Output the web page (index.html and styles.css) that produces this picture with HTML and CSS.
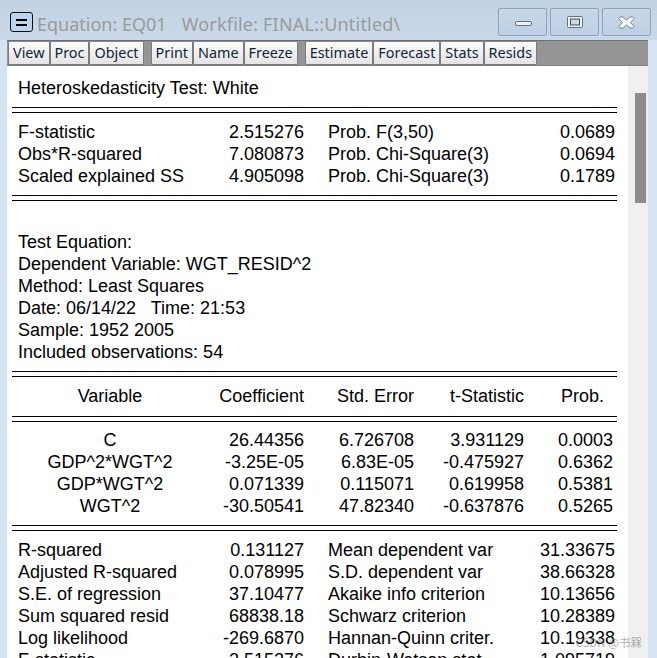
FILE: index.html
```html
<!DOCTYPE html>
<html lang="en">
<head>
<meta charset="utf-8">
<title>Equation: EQ01</title>
<link rel="stylesheet" href="styles.css">
</head>
<body>
<div class="window">
  <header class="titlebar">
    <div class="sysbtn"><span class="sysbar"></span></div>
    <div class="title"><span>Equation: EQ01</span><span class="wf">Workfile: FINAL::Untitled\</span></div>
    <div class="caption">
      <div class="capbtn"><svg width="24" height="14" viewBox="0 0 24 14"><rect x="4.5" y="6.5" width="16" height="4" rx="1.5" fill="#eef2f6" stroke="#66717e"/></svg></div>
      <div class="capbtn"><svg width="18" height="14" viewBox="0 0 18 14"><rect x="1.5" y="1.5" width="15" height="11" rx="1" fill="#eef2f6" stroke="#66717e"/><rect x="4.5" y="4" width="9" height="6" fill="#c9d8e8" stroke="#3f4a57"/></svg></div>
      <div class="capbtn"><svg width="19" height="15" viewBox="0 0 24 18"><path d="M4 2h4l4 4 4-4h4l2 2-5 5 5 5-2 2h-4l-4-4-4 4H4l-2-2 5-5-5-5z" fill="#f2f4f6" stroke="#5f6b78"/></svg></div>
    </div>
  </header>
  <nav class="toolbar">
    <button class="tool">View</button><button class="tool">Proc</button><button class="tool">Object</button>
    <span class="sep"></span>
    <button class="tool">Print</button><button class="tool">Name</button><button class="tool">Freeze</button>
    <span class="sep"></span>
    <button class="tool">Estimate</button><button class="tool">Forecast</button><button class="tool">Stats</button><button class="tool">Resids</button>
  </nav>
  <div class="body">
    <main class="output">
      <div class="row"><span>Heteroskedasticity Test: White</span></div>
      <div class="dbl"></div>
      <div class="row four"><span>F-statistic</span><span class="r">2.515276</span><span class="l2">Prob. F(3,50)</span><span class="r">0.0689</span></div>
      <div class="row four"><span>Obs*R-squared</span><span class="r">7.080873</span><span class="l2">Prob. Chi-Square(3)</span><span class="r">0.0694</span></div>
      <div class="row four"><span>Scaled explained SS</span><span class="r">4.905098</span><span class="l2">Prob. Chi-Square(3)</span><span class="r">0.1789</span></div>
      <div class="dbl"></div>
      <div class="gap"></div>
      <div class="row"><span>Test Equation:</span></div>
      <div class="row"><span>Dependent Variable: WGT_RESID^2</span></div>
      <div class="row"><span>Method: Least Squares</span></div>
      <div class="row"><span>Date: 06/14/22&nbsp;&nbsp; Time: 21:53</span></div>
      <div class="row"><span>Sample: 1952 2005</span></div>
      <div class="row"><span>Included observations: 54</span></div>
      <div class="dbl"></div>
      <div class="row five head"><span class="c">Variable</span><span class="r">Coefficient</span><span class="r">Std. Error</span><span class="r">t-Statistic</span><span class="r">Prob.</span></div>
      <div class="dbl under-head"></div>
      <div class="row five"><span class="c">C</span><span class="r">26.44356</span><span class="r">6.726708</span><span class="r">3.931129</span><span class="r">0.0003</span></div>
      <div class="row five"><span class="c">GDP^2*WGT^2</span><span class="r">-3.25E-05</span><span class="r">6.83E-05</span><span class="r">-0.475927</span><span class="r">0.6362</span></div>
      <div class="row five"><span class="c">GDP*WGT^2</span><span class="r">0.071339</span><span class="r">0.115071</span><span class="r">0.619958</span><span class="r">0.5381</span></div>
      <div class="row five"><span class="c">WGT^2</span><span class="r">-30.50541</span><span class="r">47.82340</span><span class="r">-0.637876</span><span class="r">0.5265</span></div>
      <div class="dbl"></div>
      <div class="row four"><span>R-squared</span><span class="r">0.131127</span><span class="l2">Mean dependent var</span><span class="r">31.33675</span></div>
      <div class="row four"><span>Adjusted R-squared</span><span class="r">0.078995</span><span class="l2">S.D. dependent var</span><span class="r">38.66328</span></div>
      <div class="row four"><span>S.E. of regression</span><span class="r">37.10477</span><span class="l2">Akaike info criterion</span><span class="r">10.13656</span></div>
      <div class="row four"><span>Sum squared resid</span><span class="r">68838.18</span><span class="l2">Schwarz criterion</span><span class="r">10.28389</span></div>
      <div class="row four"><span>Log likelihood</span><span class="r">-269.6870</span><span class="l2">Hannan-Quinn criter.</span><span class="r">10.19338</span></div>
      <div class="row four"><span>F-statistic</span><span class="r">2.515276</span><span class="l2">Durbin-Watson stat</span><span class="r">1.095719</span></div>
    </main>
    <aside class="scrollbar"><div class="thumb"></div></aside>
  </div>
</div>
<div class="watermark">CSDN @书槑</div>
</body>
</html>
```
FILE: styles.css
```css
* { box-sizing: border-box; }
html, body { margin: 0; height: 100%; overflow: hidden; }
body { position: relative; font-family: "Liberation Sans", Arial, sans-serif; background: #d6e4f2; }
.window { width: 657px; height: 658px; display: flex; flex-direction: column; overflow: hidden; }
.titlebar { height: 40px; flex: none; display: flex; align-items: flex-start; padding: 12px 0 0 10px; background: linear-gradient(#c1d2e3, #c9d9e8); }
.sysbtn { width: 23px; height: 20px; border: 1px solid #111; border-radius: 3px; background: #bcd5ee; display: flex; align-items: center; justify-content: center; }
.sysbar { width: 11px; height: 7px; border-top: 2px solid #000; border-bottom: 2px solid #000; }
.title { margin-left: 4px; font-family: "Noto Sans", sans-serif; font-size: 18px; line-height: 24px; color: #9a9a9a; white-space: nowrap; flex: 1; }
.wf { margin-left: 15px; letter-spacing: 0.2px; }
.caption { display: flex; gap: 3px; margin: -4px 6px 0 0; }
.capbtn { width: 49px; height: 28px; border: 1px solid #8fa3bd; border-radius: 2px; background: linear-gradient(#c9d8e8, #bcd0e4); display: flex; align-items: center; justify-content: center; }
.toolbar { height: 26px; flex: none; margin: 0 9px 0 7px; display: flex; align-items: stretch; background: #959595; padding: 0 0 0 1px; border-top: 1px solid #6e6e6e; border-bottom: 1px solid #808080; }
.tool { height: 24px; padding: 0 4px; border: 1px solid #7b7b7b; border-top-color: #8a8a8a; border-radius: 2px; background: linear-gradient(#fbfbfb, #e4e4e4); font-family: "Noto Sans", sans-serif; font-size: 14.4px; line-height: 22px; color: #10243c; cursor: default; }
.sep { width: 7px; flex: none; }
.body { flex: 1; min-height: 0; display: flex; margin: 0 9px 0 7px; background: #fff; }
.output { width: 621px; padding: 11px 11px 0 5px; background: #fff; flex: none; color: #000; font-size: 18px; }
.row { height: 22px; line-height: 22px; padding-left: 6px; white-space: nowrap; display: flex; }
.four { display: grid; grid-template-columns: 180px 108px 200px 109px; }
.four .r:nth-child(2) { padding-right: 2px; }
.five { display: grid; grid-template-columns: 184px 104px 110px 110px 88px; }
.five .c { text-align: center; }
.five .r { padding-right: 2px; }
.five .r:last-child { padding-right: 1px; }
.head .r:last-child { padding-right: 10px; }
.r { text-align: right; }
.l2 { padding-left: 22px; }
.dbl { height: 6px; margin: 8px 0; border-top: 1px solid #000; border-bottom: 1px solid #000; }
.dbl.under-head { margin: 9px 0 7px; }
.gap { height: 22px; }
.scrollbar { width: 20px; flex: none; background: #f0f0f0; padding: 27px 2px 0 7px; }
.thumb { width: 11px; height: 110px; background: #8c8c8c; }
.watermark { position: absolute; right: 15px; bottom: 8px; font-family: "Noto Sans CJK SC", "Liberation Sans", sans-serif; font-size: 11.5px; line-height: 16px; color: rgba(120, 120, 120, 0.6); }
```
